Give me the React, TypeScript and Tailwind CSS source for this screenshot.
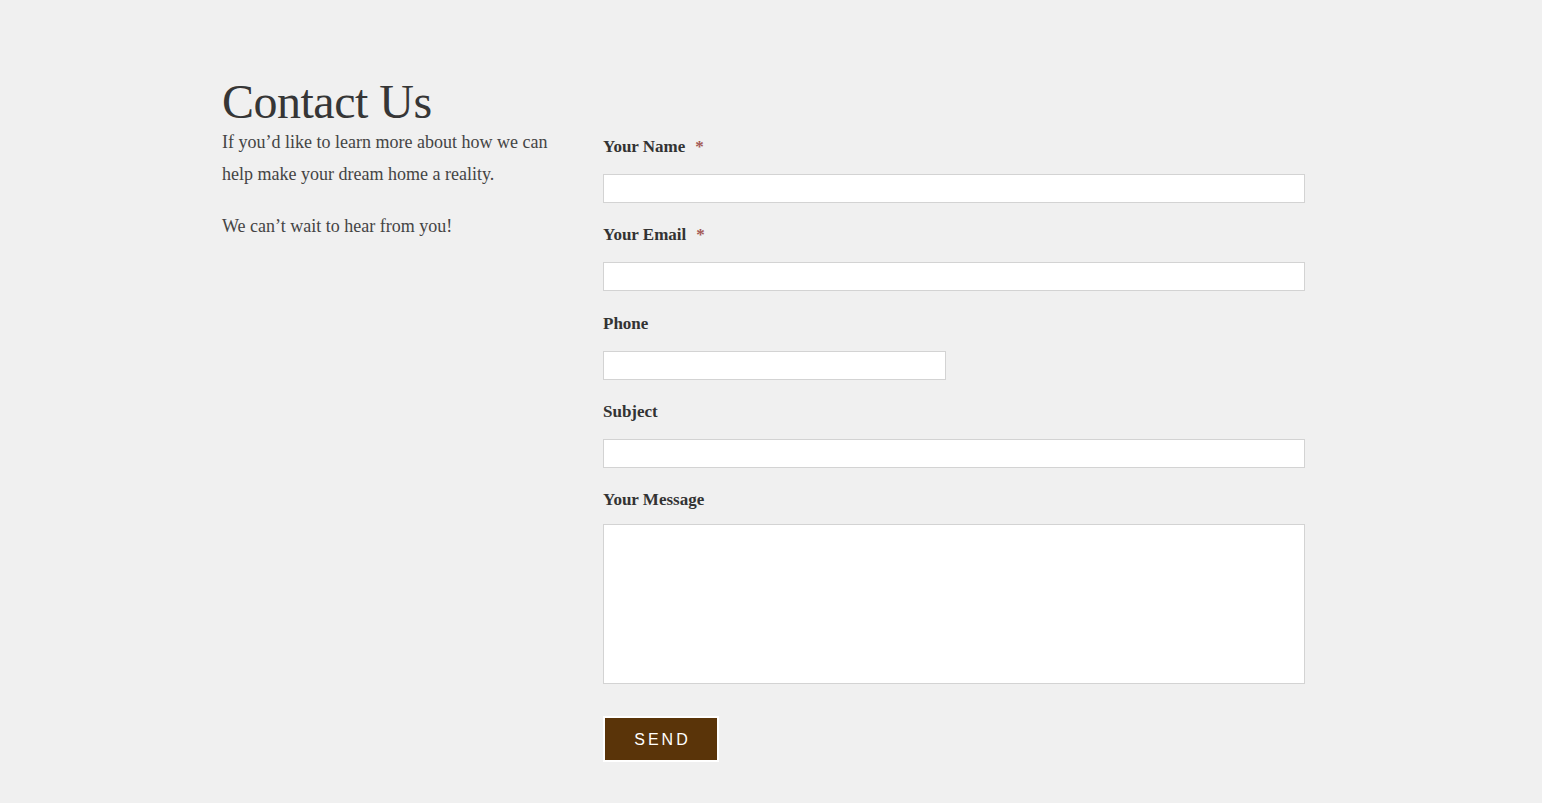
import React from "react";

const serif = { fontFamily: '"Liberation Serif", "DejaVu Serif", serif' };

function Field({ label, required, wide = true, mb = "mb-[20px]" }: { label: string; required?: boolean; wide?: boolean; mb?: string }) {
  return (
    <div className={mb}>
      <label className="block text-[17px] leading-6 font-bold text-[#333]">
        {label}
        {required && <span className="ml-[10px] text-[#a35a55] font-bold">*</span>}
      </label>
      <input
        type="text"
        className={`mt-[15px] block h-[29px] ${wide ? "w-[702px]" : "w-[343px]"} border border-[#d3d3d3] bg-white outline-none`}
      />
    </div>
  );
}

export default function App() {
  return (
    <div className="min-h-screen w-full bg-[#f0f0f0]" style={serif}>
      <div className="mx-auto w-[1098px] pt-[78px] grid grid-cols-[381px_702px]">
        <div>
          <h1 className="text-[48px] leading-[48px] text-[#363636] font-normal tracking-[-0.5px]">Contact Us</h1>
          <p className="text-[18px] leading-[32px] text-[#444] w-[340px]">
            If you’d like to learn more about how we can help make your dream home a reality.
          </p>
          <p className="mt-[20px] text-[18px] leading-[32px] text-[#444]">We can’t wait to hear from you!</p>
        </div>
        <div className="pt-[57px]">
          <Field label="Your Name" required />
          <Field label="Your Email" required mb="mb-[21px]" />
          <Field label="Phone" wide={false} />
          <Field label="Subject" />
          <div>
            <label className="block text-[17px] leading-6 font-bold text-[#333]">Your Message</label>
            <textarea className="mt-[12px] block h-[160px] w-[702px] resize-none border border-[#d3d3d3] bg-white outline-none" />
          </div>
          <button
            className="mt-[32px] h-[46px] w-[116px] border-2 border-white bg-[#5a3409] text-white text-[16px] leading-none tracking-[3px] pl-[3px] pt-[2px]"
            style={{ fontFamily: '"Liberation Sans", Arial, sans-serif' }}
          >
            SEND
          </button>
        </div>
      </div>
    </div>
  );
}
